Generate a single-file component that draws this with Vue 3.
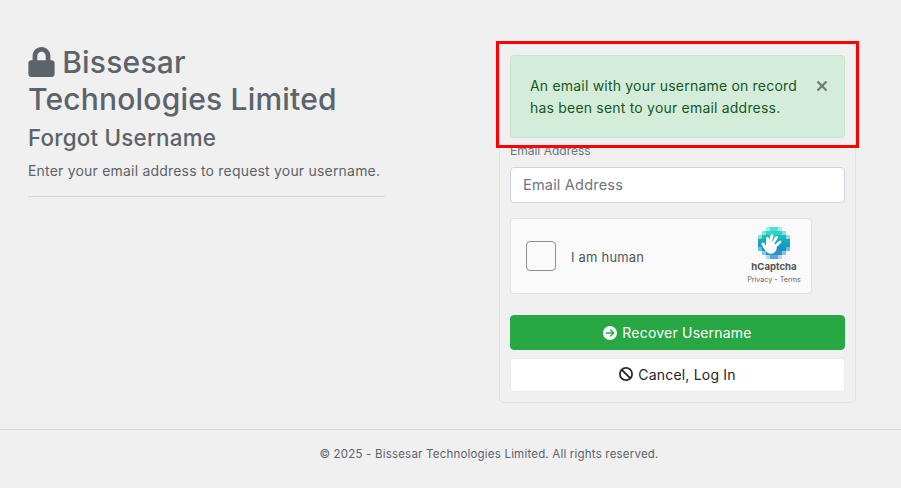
<script setup>
const logo = [
  [8, 0, 4, '#a6ece5'], [12, 0, 8, '#4fded1'], [20, 0, 4, '#a6ece5'],
  [4, 4, 4, '#7fe3da'], [8, 4, 16, '#2fd3c8'], [24, 4, 4, '#7fe3da'],
  [0, 8, 4, '#8fdfd8'], [4, 8, 24, '#18bcc2'], [28, 8, 4, '#8fdfd8'],
  [0, 12, 32, '#13acbf'],
  [0, 16, 32, '#139fc1'],
  [0, 20, 4, '#6fbedc'], [4, 20, 24, '#1b93c8'], [28, 20, 4, '#6fbedc'],
  [4, 24, 4, '#86c5e4'], [8, 24, 16, '#2f93ce'], [24, 24, 4, '#86c5e4'],
  [8, 28, 4, '#b2d6ee'], [12, 28, 8, '#5aa5d8'], [20, 28, 4, '#b2d6ee'],
];
const fingers = [
  'M8 22L5 17',
  'M9.500 19L9.500 11.500',
  'M11.500 17L14 9',
  'M14 17.500L18.500 10.500',
  'M16.500 20L22 15',
];
</script>

<template>
  <div class="page">
    <main class="main">
      <section class="intro">
        <h1 class="brand">
          <svg class="lock" viewBox="0 0 448 512" aria-hidden="true">
            <path fill="currentColor" d="M400 224h-24v-72C376 68.200 307.800 0 224 0S72 68.200 72 152v72H48c-26.500 0-48 21.500-48 48v192c0 26.500 21.500 48 48 48h352c26.500 0 48-21.500 48-48V272c0-26.500-21.500-48-48-48zm-104 0H152v-72c0-39.700 32.300-72 72-72s72 32.300 72 72v72z" />
          </svg>
          Bissesar<br />Technologies Limited
        </h1>
        <h2 class="subtitle">Forgot Username</h2>
        <p class="lead">Enter your email address to request your username.</p>
        <hr class="rule" />
      </section>

      <section class="card">
        <div class="alert">
          <span>An email with your username on record has been sent to your email address.</span>
          <svg class="close" viewBox="0 0 12 12" aria-hidden="true">
            <path d="M1.500 1.500l9 9m0-9l-9 9" fill="none" stroke="currentColor" stroke-width="2.200" />
          </svg>
        </div>
        <label class="label" for="email">Email Address</label>
        <input id="email" class="input" type="text" placeholder="Email Address" />

        <div class="captcha">
          <span class="check"></span>
          <span class="human">I am human</span>
          <div class="hc">
            <svg class="hc-logo" viewBox="0 0 32 32" aria-hidden="true">
              <rect v-for="(c, i) in logo" :key="i" :x="c[0]" :y="c[1]" :width="c[2]" height="4" :fill="c[3]" />
              <path v-for="(d, i) in fingers" :key="'f' + i" :d="d" fill="none" stroke="#fff" stroke-width="3" stroke-linecap="round" />
              <ellipse cx="12.800" cy="21" rx="6" ry="5.800" fill="#fff" />
            </svg>
            <div class="hc-name">hCaptcha</div>
            <div class="hc-links">Privacy - Terms</div>
          </div>
        </div>

        <button class="btn primary" type="button">
          <svg class="btn-icon" viewBox="0 0 512 512" aria-hidden="true">
            <path fill="currentColor" d="M0 256a256 256 0 1 0 512 0A256 256 0 1 0 0 256zM297 385c-9.400 9.400-24.600 9.400-33.900 0s-9.400-24.600 0-33.900l71-71L120 280c-13.300 0-24-10.700-24-24s10.700-24 24-24l214.100 0-71-71c-9.400-9.400-9.400-24.600 0-33.900s24.600-9.400 33.900 0L409 239c9.400 9.400 9.400 24.600 0 33.900L297 385z" />
          </svg>
          Recover Username
        </button>
        <button class="btn ghost" type="button">
          <svg class="btn-icon" viewBox="0 0 512 512" aria-hidden="true">
            <path fill="currentColor" d="M367.200 412.500L99.500 144.800C77.100 176.100 64 214.500 64 256c0 106 86 192 192 192c41.500 0 79.900-13.100 111.200-35.500zm45.300-45.300C434.900 335.900 448 297.500 448 256c0-106-86-192-192-192c-41.500 0-79.900 13.100-111.200 35.500L412.500 367.200zM0 256a256 256 0 1 1 512 0A256 256 0 1 1 0 256z" />
          </svg>
          Cancel, Log In
        </button>

        <div class="highlight"></div>
      </section>
    </main>

    <footer class="footer">© 2025 - Bissesar Technologies Limited. All rights reserved.</footer>
  </div>
</template>

<style>
body {
  margin: 0;
  background: #f0f0f0;
}
</style>

<style scoped>
.page {
  width: 901px;
  height: 488px;
  overflow: hidden;
  background: #f0f0f0;
  font-family: Inter, "Liberation Sans", sans-serif;
  letter-spacing: 0.2px;
  color: #5c636a;
  display: flex;
  flex-direction: column;
}
.main {
  display: flex;
  justify-content: space-between;
  align-items: flex-start;
  padding: 44px 45px 0 28px;
  height: 385px;
  box-sizing: content-box;
}
.intro {
  width: 357px;
}
.brand {
  margin: 0;
  font-size: 30px;
  font-weight: 500;
  line-height: 36.500px;
  color: #5c636a;
}
.lock {
  width: 27px;
  height: 30px;
  margin-right: -1px;
  vertical-align: -4px;
}
.subtitle {
  margin: 8px 0 0;
  font-size: 22.400px;
  font-weight: 500;
  line-height: 26px;
}
.lead {
  margin: 9px 0 0;
  font-size: 14px;
  line-height: 21px;
}
.rule {
  margin: 15px 0 0;
  border: 0;
  border-top: 1px solid #d6d7d8;
}
.card {
  position: relative;
  width: 357px;
  height: 359px;
  box-sizing: border-box;
  padding: 10px;
  border: 1px solid #e0e1e3;
  border-radius: 5px;
}
.alert {
  display: flex;
  align-items: center;
  justify-content: space-between;
  box-sizing: border-box;
  height: 83px;
  padding: 0 16px 0 19px;
  background: #d4edda;
  border: 1px solid #c3e6cb;
  border-radius: 4px;
  color: #155724;
  font-size: 14px;
  line-height: 22px;
}
.alert span {
  width: 275px;
}
.close {
  align-self: flex-start;
  width: 12px;
  height: 12px;
  margin-top: 24px;
  color: #6e7b72;
}
.label {
  display: block;
  margin-top: 5px;
  font-size: 12px;
  line-height: 16px;
  letter-spacing: 0;
  color: #6c757d;
}
.input {
  display: block;
  width: 100%;
  box-sizing: border-box;
  height: 36px;
  margin-top: 8px;
  padding: 0 12px 2px;
  border: 1px solid #ced4da;
  border-radius: 4px;
  background: #fff;
  font: 400 14.500px Inter, "Liberation Sans", sans-serif;
  letter-spacing: 0.2px;
}
.input::placeholder {
  color: #6c757d;
  opacity: 1;
}
.captcha {
  display: flex;
  align-items: center;
  box-sizing: border-box;
  width: 302px;
  height: 76px;
  margin-top: 15px;
  padding: 0 0 0 15px;
  background: #fafafa;
  border: 1px solid #e0e0e0;
  border-radius: 4px;
}
.check {
  width: 30px;
  height: 30px;
  box-sizing: border-box;
  flex: none;
  background: #fafafa;
  border: 1px solid #8e8e8e;
  border-radius: 4px;
}
.human {
  margin-left: 15px;
  padding-top: 1px;
  font-size: 13px;
  color: #555;
}
.hc {
  margin-left: auto;
  width: 64px;
  margin-right: 5px;
  display: flex;
  flex-direction: column;
  align-items: center;
}
.hc-logo {
  width: 32px;
  height: 32px;
}
.hc-name {
  margin-top: 1px;
  font-size: 9.600px;
  font-weight: 700;
  line-height: 14px;
  letter-spacing: 0;
  color: #555;
}
.hc-links {
  font-size: 7.200px;
  line-height: 11px;
  letter-spacing: 0;
  color: #666;
  white-space: nowrap;
}
.btn {
  display: flex;
  align-items: center;
  justify-content: center;
  gap: 5px;
  width: 100%;
  box-sizing: border-box;
  border-radius: 4px;
  font: 400 14px Inter, "Liberation Sans", sans-serif;
  letter-spacing: 0.200px;
  padding: 0;
}
.primary {
  height: 35px;
  margin-top: 21px;
  background: #28a745;
  border: 1px solid #28a745;
  color: #fff;
}
.ghost {
  height: 34px;
  margin-top: 8px;
  padding-bottom: 2px;
  background: #fff;
  border: 1px solid #e9ecef;
  color: #212529;
}
.btn-icon {
  width: 14px;
  height: 14px;
}
.highlight {
  position: absolute;
  left: -4px;
  top: -4px;
  width: 363px;
  height: 107px;
  box-sizing: border-box;
  border: 3px solid #ff0000;
}
.footer {
  border-top: 1px solid #d6d7d8;
  padding-top: 16px;
  padding-left: 77px;
  text-align: center;
  font-size: 11.500px;
  line-height: 16px;
  color: #5c636a;
}
</style>
